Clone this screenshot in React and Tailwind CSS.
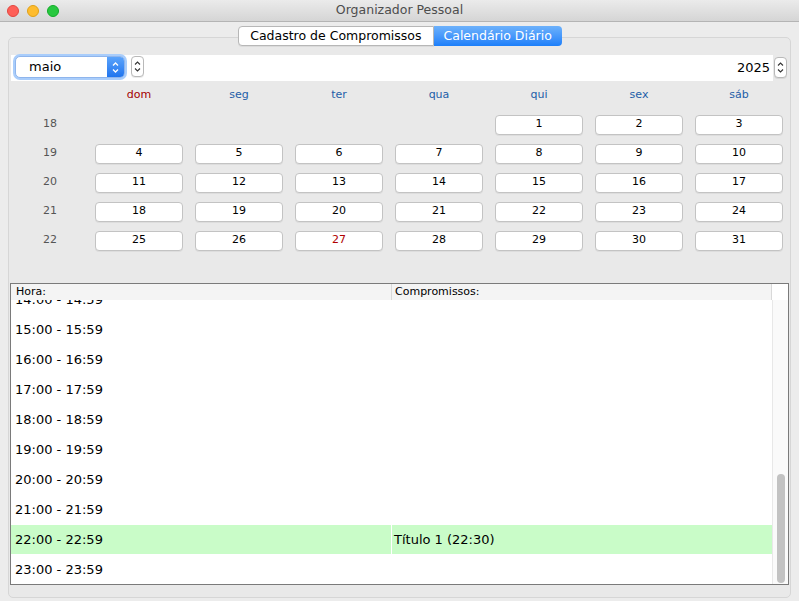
import React from 'react';

const weekdays = [
  { label: 'dom', red: true },
  { label: 'seg' },
  { label: 'ter' },
  { label: 'qua' },
  { label: 'qui' },
  { label: 'sex' },
  { label: 'sáb' },
];

// semanas de maio/2025 (null = célula vazia)
const weeks = [
  { n: 18, days: [null, null, null, null, 1, 2, 3] },
  { n: 19, days: [4, 5, 6, 7, 8, 9, 10] },
  { n: 20, days: [11, 12, 13, 14, 15, 16, 17] },
  { n: 21, days: [18, 19, 20, 21, 22, 23, 24] },
  { n: 22, days: [25, 26, 27, 28, 29, 30, 31] },
];

const hours = [14, 15, 16, 17, 18, 19, 20, 21, 22, 23];
const appointments = { 22: 'Título 1 (22:30)' };

function pad(n) {
  return String(n).padStart(2, '0');
}

function Spinner() {
  return (
    <div className="flex h-[21px] w-[13px] flex-col items-center justify-center rounded-[4px] border border-[#b9b9b9] bg-white shadow-[0_1px_0_rgba(0,0,0,0.08)]">
      <svg width="7" height="15" viewBox="0 0 7 15" fill="none" stroke="#333" strokeWidth="1.1">
        <path d="M1 5.5 L3.5 3 L6 5.5" />
        <path d="M1 9.5 L3.5 12 L6 9.5" />
      </svg>
    </div>
  );
}

function MonthCombo() {
  return (
    <div className="flex h-[22px] w-[110px] rounded-[5px] border border-[#8fb5ec] bg-white shadow-[0_0_0_2px_#a9cdfb]">
      <div className="flex flex-1 items-center pl-[13px] text-[13px] text-black">maio</div>
      <div className="flex w-[17px] items-center justify-center rounded-r-[4px] bg-gradient-to-b from-[#5aa3fb] to-[#1f74ee]">
        <svg width="7" height="15" viewBox="0 0 7 15" fill="none" stroke="#fff" strokeWidth="1.3">
          <path d="M1 5.5 L3.5 3 L6 5.5" />
          <path d="M1 9.5 L3.5 12 L6 9.5" />
        </svg>
      </div>
    </div>
  );
}

export default function App() {
  return (
    <div className="flex h-[601px] w-[799px] flex-col overflow-hidden bg-[#ececec] font-['DejaVu_Sans','Liberation_Sans',sans-serif]">
      {/* barra de título */}
      <div className="relative flex h-[22px] shrink-0 items-center justify-center border-b border-[#b4b4b4] bg-gradient-to-b from-[#ebebeb] to-[#d5d5d5]">
        <div className="absolute left-[7px] top-[5px] flex gap-[8px]">
          <span className="h-[12px] w-[12px] rounded-full border border-[#e2463f] bg-[#fe5f57]" />
          <span className="h-[12px] w-[12px] rounded-full border border-[#e1a116] bg-[#febc2e]" />
          <span className="h-[12px] w-[12px] rounded-full border border-[#12ac28] bg-[#28c840]" />
        </div>
        <span className="text-[12.5px] text-[#4d4d4d]">Organizador Pessoal</span>
      </div>

      <div className="flex flex-1 flex-col px-[8px] pt-[4px] pb-[3px]">
        {/* abas */}
        <div className="relative z-10 -mb-[9px] flex justify-center pl-[1px]">
          <div className="flex h-[20px] items-center rounded-l-[4px] border border-[#b7b7b7] bg-white px-[11px] text-[12.5px] text-black shadow-[0_1px_0_rgba(0,0,0,0.06)]">
            Cadastro de Compromissos
          </div>
          <div className="flex h-[20px] items-center rounded-r-[4px] bg-gradient-to-b from-[#6cb1fb] to-[#1b7ffa] px-[10px] text-[12.5px] text-white">
            Calendário Diário
          </div>
        </div>

        <div className="flex flex-1 flex-col rounded-[5px] border border-[#d6d6d6] bg-[#e9e9e9] pt-[17px] pl-[2px] pr-[1px]">
          {/* mês / ano */}
          <div className="flex h-[26px] items-start">
            <div className="flex h-[26px] flex-1 items-start bg-white pl-[4px] pt-[1px]">
              <MonthCombo />
              <div className="ml-[6px]">
                <Spinner />
              </div>
              <div className="flex h-[24px] flex-1 items-center justify-end pr-[3px] text-[13px] text-black">2025</div>
            </div>
            <div className="ml-[1px] mr-[2px] pt-[2px]">
              <Spinner />
            </div>
          </div>

          {/* calendário */}
          <div className="grid grid-cols-[78px_repeat(7,100px)] text-[11px]">
            <div className="h-[29px]" />
            {weekdays.map((d) => (
              <div
                key={d.label}
                className={`flex h-[29px] items-center justify-center ${d.red ? 'text-[#a30000]' : 'text-[#1d5ea8]'}`}
              >
                {d.label}
              </div>
            ))}
            {weeks.map((w) => (
              <React.Fragment key={w.n}>
                <div className="flex h-[29px] items-center justify-center text-[#555]">{w.n}</div>
                {w.days.map((d, i) => (
                  <div key={i} className="flex h-[29px] items-center justify-center">
                    {d && (
                      <div
                        className={`flex h-[20px] w-[88px] items-center justify-center rounded-[4px] border border-[#c3c3c3] bg-white shadow-[0_1px_0_rgba(0,0,0,0.05)] ${d === 27 ? 'text-[#b00000]' : 'text-black'}`}
                      >
                        {d}
                      </div>
                    )}
                  </div>
                ))}
              </React.Fragment>
            ))}
          </div>

          {/* tabela de horários */}
          <div className="mt-[28px] mb-[2px] ml-[-1px] flex h-[302px] flex-col border border-[#7a7a7a] bg-white">
            <div className="flex h-[16px] shrink-0 bg-[#f4f4f4] text-[11px] text-black">
              <div className="flex w-[381px] items-center border-r border-[#d9d9d9] pl-[5px]">Hora:</div>
              <div className="flex w-[380px] items-center border-r border-[#d9d9d9] pl-[3px]">Compromissos:</div>
              <div className="flex-1 bg-white" />
            </div>
            <div className="flex flex-1 overflow-hidden">
              <div className="flex-1 overflow-hidden">
                <div className="-mt-[15px]">
                  {hours.map((h) => {
                    const appt = appointments[h];
                    const bg = appt ? 'bg-[#c9fcc8]' : 'bg-white';
                    return (
                      <div key={h} className="flex h-[30px] border-b border-white text-[13px] text-black">
                        <div className={`flex w-[381px] items-center border-r border-white pl-[4px] ${bg}`}>
                          {pad(h)}:00 - {pad(h)}:59
                        </div>
                        <div className={`flex flex-1 items-center pl-[2px] ${bg}`}>{appt || ''}</div>
                      </div>
                    );
                  })}
                </div>
              </div>
              <div className="flex w-[16px] justify-center border-l border-[#e8e8e8] bg-[#fafafa] pt-[174px]">
                <div className="h-[109px] w-[8px] rounded-full bg-[#c2c2c2]" />
              </div>
            </div>
          </div>
        </div>
      </div>
    </div>
  );
}
